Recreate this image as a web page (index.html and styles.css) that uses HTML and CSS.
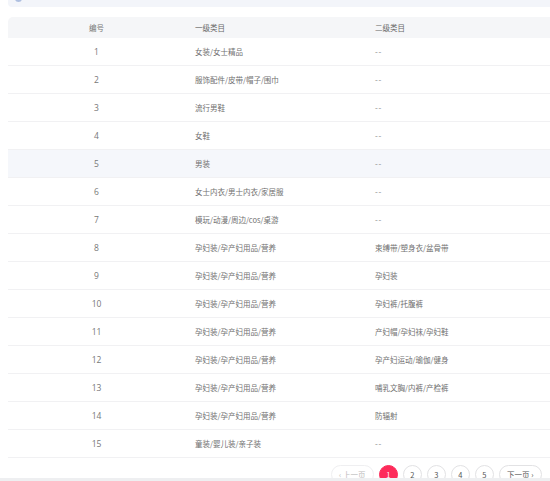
FILE: index.html
```html
<!DOCTYPE html>
<html lang="zh-CN">
<head>
<meta charset="utf-8">
<title>类目列表</title>
<link rel="stylesheet" href="styles.css">
</head>
<body>
<div class="page">
  <div class="notice"><span class="notice-icon"></span></div>
  <div class="table-wrap">
    <table class="grid">
      <colgroup><col class="c1"><col class="c2"><col class="c3"></colgroup>
      <thead>
        <tr><th class="num">编号</th><th>一级类目</th><th>二级类目</th></tr>
      </thead>
      <tbody>
        <tr><td class="num">1</td><td>女装/女士精品</td><td class="empty">--</td></tr>
        <tr><td class="num">2</td><td>服饰配件/皮带/帽子/围巾</td><td class="empty">--</td></tr>
        <tr><td class="num">3</td><td>流行男鞋</td><td class="empty">--</td></tr>
        <tr><td class="num">4</td><td>女鞋</td><td class="empty">--</td></tr>
        <tr class="hover"><td class="num">5</td><td>男装</td><td class="empty">--</td></tr>
        <tr><td class="num">6</td><td>女士内衣/男士内衣/家居服</td><td class="empty">--</td></tr>
        <tr><td class="num">7</td><td>模玩/动漫/周边/cos/桌游</td><td class="empty">--</td></tr>
        <tr><td class="num">8</td><td>孕妇装/孕产妇用品/营养</td><td>束缚带/塑身衣/盆骨带</td></tr>
        <tr><td class="num">9</td><td>孕妇装/孕产妇用品/营养</td><td>孕妇装</td></tr>
        <tr><td class="num">10</td><td>孕妇装/孕产妇用品/营养</td><td>孕妇裤/托腹裤</td></tr>
        <tr><td class="num">11</td><td>孕妇装/孕产妇用品/营养</td><td>产妇帽/孕妇袜/孕妇鞋</td></tr>
        <tr><td class="num">12</td><td>孕妇装/孕产妇用品/营养</td><td>孕产妇运动/瑜伽/健身</td></tr>
        <tr><td class="num">13</td><td>孕妇装/孕产妇用品/营养</td><td>哺乳文胸/内裤/产检裤</td></tr>
        <tr><td class="num">14</td><td>孕妇装/孕产妇用品/营养</td><td>防辐射</td></tr>
        <tr><td class="num">15</td><td>童装/婴儿装/亲子装</td><td class="empty">--</td></tr>
      </tbody>
    </table>
  </div>
  <div class="pager">
    <button class="pg pg-wide pg-disabled">‹ 上一页</button>
    <button class="pg pg-active">1</button>
    <button class="pg">2</button>
    <button class="pg">3</button>
    <button class="pg">4</button>
    <button class="pg">5</button>
    <button class="pg pg-wide">下一页 ›</button>
  </div>
</div>
<div class="bottom-strip"></div>
</body>
</html>
```

FILE: styles.css
```css
html, body {
  margin: 0;
  padding: 0;
  background: #ffffff;
  overflow: hidden;
}

body {
  font-family: "Noto Sans CJK SC", "Noto Sans", sans-serif;
  color: #666;
}

.page {
  width: 542px;
  margin-left: 8px;
}

.notice {
  height: 7px;
  width: 560px;
  background: #f3f5fa;
  border-radius: 0 0 4px 4px;
  overflow: hidden;
}

.notice-icon {
  display: block;
  width: 7px;
  height: 7px;
  margin-left: 7px;
  margin-top: -5px;
  border-radius: 50%;
  background: #aebfe0;
}

.table-wrap {
  margin-top: 10px;
  width: 560px;
}

.grid {
  width: 100%;
  border-collapse: separate;
  border-spacing: 0;
  table-layout: fixed;
  font-size: 7.5px;
}

.c1 { width: 177px; }
.c2 { width: 180px; }

.grid th {
  height: 21px;
  padding: 0 10px;
  background: #f5f6f8;
  font-weight: normal;
  color: #666;
  text-align: left;
}

.grid th:first-child {
  border-top-left-radius: 5px;
}

.grid td {
  height: 27px;
  padding: 0 10px;
  border-bottom: 1px solid #f1f1f3;
  color: #707070;
  white-space: nowrap;
  overflow: hidden;
}

.grid .num {
  text-align: center;
  padding: 0;
  color: #777;
}

.grid td.num {
  font-family: "Open Sans", "Noto Sans", sans-serif;
  font-size: 8.5px;
}

.grid .empty {
  color: #999;
  letter-spacing: 0.8px;
  font-size: 8.5px;
  font-family: "Open Sans", sans-serif;
}

.grid tr.hover td {
  background: #f5f7fb;
}

.pager {
  display: flex;
  justify-content: flex-end;
  gap: 4.5px;
  margin-top: 7px;
  padding-right: 8px;
}

.pg {
  box-sizing: border-box;
  height: 19px;
  min-width: 19.5px;
  padding: 0;
  border: 1px solid #e2e2e4;
  border-radius: 10px;
  background: #fff;
  color: #555;
  font-family: "Noto Sans CJK SC", "Noto Sans", sans-serif;
  font-size: 7.5px;
  display: flex;
  align-items: center;
  justify-content: center;
}

.pg-wide {
  width: 43.5px;
}

.pg-disabled {
  color: #bbb;
  border-color: #efeff1;
}

.pg-active {
  background: #fd2b5a;
  border-color: #fd2b5a;
  color: #fff;
}

.bottom-strip {
  position: fixed;
  left: 0;
  right: 0;
  bottom: 0;
  height: 3px;
  background: #eeeff1;
}
```
